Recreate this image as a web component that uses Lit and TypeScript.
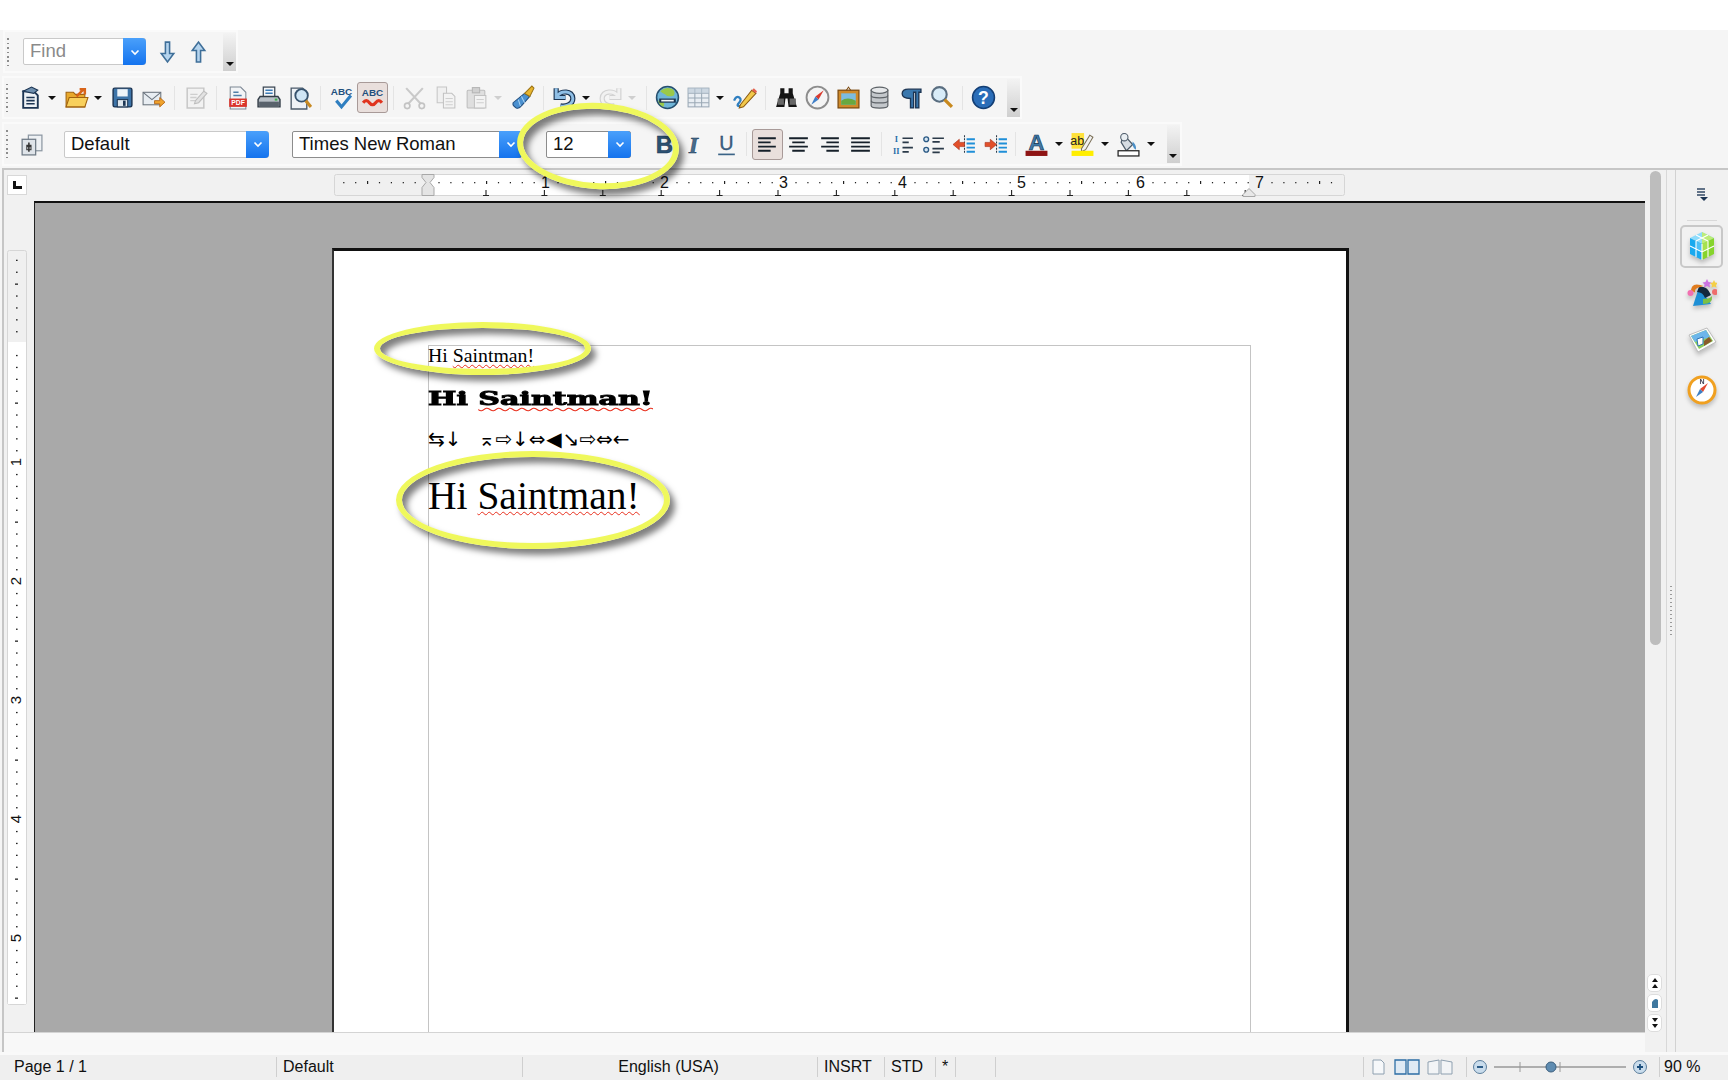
import { LitElement, html, css, svg, TemplateResult } from "lit";
import { customElement } from "lit/decorators.js";

const F = `font-family="Liberation Sans, Arial, sans-serif"`;
const DK = "#1c3553";
const I: Record<string, TemplateResult> = {
  down: svg`<path d="M10 3h4v11h4l-6 8-6-8h4z" fill="#b5d4ee" stroke="#3f6f99" stroke-width="1.500"/>`,
  up: svg`<path d="M10 22h4V11h4l-6-8-6 8h4z" fill="#b5d4ee" stroke="#3f6f99" stroke-width="1.500"/>`,
  new: svg`<path d="M5 6h10l4 4v12H5z" fill="#eef2f6" stroke="${DK}" stroke-width="1.8"/><path d="M5 6l8-4 6 3-4 3z" fill="#6f8fae" stroke="${DK}"/><path d="M8 12h8M8 15h8M8 18h8" stroke="${DK}" stroke-width="1.6"/>`,
  open: svg`<path d="M2 7h7l2 2h9v12H2z" fill="#e8a92c" stroke="#a0620f"/><path d="M2 21l3-9h18l-3 9z" fill="#f8d05c" stroke="#a0620f"/><path d="M12 11l7-7m-4 0h5v5" fill="none" stroke="#d8641a" stroke-width="2.4"/>`,
  save: svg`<rect x="3" y="3" width="18" height="18" rx="1.5" fill="#3d74a8" stroke="${DK}" stroke-width="1.4"/><rect x="7" y="4" width="10" height="7" fill="#eef4f9"/><rect x="7" y="14" width="10" height="7" fill="#dfe7ee" stroke="${DK}"/><rect x="12.5" y="15" width="2.5" height="5" fill="${DK}"/>`,
  mail: svg`<rect x="2" y="7" width="17" height="12" fill="#e8edf2" stroke="#69727c"/><path d="M2 7l8.5 7L19 7" fill="none" stroke="#69727c"/><path d="M13 15h5v-3l5 4.5-5 4.5v-3h-5z" fill="#f0a32c" stroke="#b05f10" stroke-width=".8"/>`,
  edit: svg`<path d="M4 3h16v19H4z" fill="#f2f2f2" stroke="#c6c6c6" stroke-width="1.4"/><path d="M7 9h7M7 12h6M7 15h5" stroke="#cfcfcf" stroke-width="1.4"/><path d="M12 15l8-9 3 2-8 9-4 1z" fill="#e2e2e2" stroke="#bdbdbd"/>`,
  pdf: svg`<path d="M5 2h10l5 5v16H5z" fill="#f2f4f6" stroke="#7d8894"/><path d="M8 7h5M8 10h8" stroke="#4f7ea8" stroke-width="1.5"/><rect x="4" y="13" width="17" height="8" fill="#d9342b"/><text x="12.5" y="19.6" font-size="6.5" font-weight="700" fill="#fff" text-anchor="middle" ${F}>PDF</text>`,
  print: svg`<rect x="7" y="2" width="11" height="10" fill="#f4f6f8" stroke="#3a4653" stroke-width="1.2"/><path d="M9 5h7M9 8h7" stroke="#3a7ab5" stroke-width="1.4"/><path d="M4 11h17l2 3v7H2v-7z" fill="#b9c0c7" stroke="#333d47" stroke-width="1.4"/><rect x="3" y="16" width="19" height="5" fill="#59626c"/><rect x="18" y="13" width="2.5" height="2" fill="#3fae4a"/>`,
  preview: svg`<path d="M4 3h11l4 4v16H4z" fill="#eef2f6" stroke="#4a5a6a" stroke-width="1.3"/><circle cx="14" cy="10" r="6" fill="#cfe5f5" stroke="#37536e" stroke-width="1.8"/><path d="M18 15l5 6" stroke="#c88a22" stroke-width="3"/>`,
  spell: svg`<text x="12" y="10" font-size="9.5" font-weight="700" fill="#1f4f7d" text-anchor="middle" ${F}>ABC</text><path d="M7 15l5 6 9-11" fill="none" stroke="#2f7fc0" stroke-width="3"/>`,
  autospell: svg`<text x="12" y="11" font-size="9.5" font-weight="700" fill="#1f4f7d" text-anchor="middle" ${F}>ABC</text><path d="M3 17q3-4 6 0t6 0 6 0" fill="none" stroke="#e0341e" stroke-width="3"/>`,
  cut: svg`<path d="M4 3l14 15M20 3L6 18" stroke="#c9c9c9" stroke-width="2"/><circle cx="5" cy="20" r="2.6" fill="none" stroke="#c3c3c3" stroke-width="1.6"/><circle cx="19" cy="20" r="2.6" fill="none" stroke="#c3c3c3" stroke-width="1.6"/>`,
  copy: svg`<path d="M4 2h9v15H4z" fill="#f0f0f0" stroke="#c6c6c6"/><path d="M10 8h8l3 3v11H10z" fill="#f3f3f3" stroke="#c2c2c2"/><path d="M12 13h7M12 16h7M12 19h7" stroke="#cfcfcf"/>`,
  paste: svg`<rect x="3" y="5" width="17" height="17" rx="1" fill="#dfdfdf" stroke="#bdbdbd"/><rect x="8" y="2.5" width="7" height="5" fill="#d0d0d0" stroke="#b5b5b5"/><path d="M10 10h11v12H10z" fill="#f3f3f3" stroke="#c2c2c2"/><path d="M12 14h7M12 17h7" stroke="#cfcfcf"/>`,
  brush: svg`<path d="M14 8L3 17q-1 3 3 5 3 1 5-2l8-9z" fill="#4a90d0" stroke="#234f7f"/><path d="M8 14l2 6M11 11l3 6" stroke="#a9d3f2"/><path d="M14 8l5 3 4-8-2-2z" fill="#e8b52e" stroke="#9c7415"/>`,
  undo: svg`<path d="M4 3v9h9M5 11C8 5 20 5 20 13c0 6-7 8-12 7" fill="none" stroke="${DK}" stroke-width="5"/><path d="M4 3v9h9M5 11C8 5 20 5 20 13c0 6-7 8-12 7" fill="none" stroke="#8fbfe6" stroke-width="2.8"/>`,
  redo: svg`<path d="M20 3v9h-9M19 11C16 5 4 5 4 13c0 6 7 8 12 7" fill="none" stroke="#d2d2d2" stroke-width="5"/><path d="M20 3v9h-9M19 11C16 5 4 5 4 13c0 6 7 8 12 7" fill="none" stroke="#f1f1f1" stroke-width="2.8"/>`,
  globe: svg`<circle cx="12" cy="12" r="10.5" fill="#6fb5d8" stroke="#27506f" stroke-width="1.5"/><path d="M5 6q5-5 12-2 3 3 1 6-6 2-8-1-3-1-5-3zM3 15q4-1 6 3l-1 3q-4-2-5-6z" fill="#9bc94a"/><path d="M4 13h16v4H4z" fill="#1c3553"/><path d="M6 15h12" stroke="#f0f4f7" stroke-width="1.6"/>`,
  table: svg`<rect x="2" y="3" width="20" height="18" fill="#e9eef3" stroke="#9aa8b5"/><path d="M2 8h20M2 12.500h20M2 17h20M8.500 3v18M15 3v18" stroke="#9aa8b5"/><path d="M2 3h20v5H2z" fill="#b9c8d6" opacity=".6"/>`,
  draw: svg`<path d="M2 15q2-5 5-3t-1 6q-2 3 3 2l3-2" fill="none" stroke="#2f7fc0" stroke-width="2.2"/><path d="M8 19L19 5l4 3-12 13-4 1z" fill="#f2c84a" stroke="#8b5a13"/><path d="M19 5l4 3 1-2-3-3z" fill="#e4624f"/>`,
  bino: svg`<path d="M6 3h4v5h4V3h4v5l4 13h-8l-1-8h-2l-1 8H2L6 8z" fill="#141414"/><rect x="3.500" y="13" width="6" height="6" fill="#676767"/><rect x="15" y="13" width="6" height="6" fill="#676767"/>`,
  nav: svg`<circle cx="12" cy="12" r="10.500" fill="#f4f4f4" stroke="#8d8d8d" stroke-width="1.8"/><path d="M18 5l-8 6 3 3z" fill="#d93a2e"/><path d="M6 19l4-8 3 3z" fill="#3f7fc8"/>`,
  gallery: svg`<rect x="2" y="5" width="20" height="17" fill="#cf8a2a" stroke="#7d4a0f" stroke-width="1.200"/><rect x="5" y="8" width="14" height="11" fill="#7cbce0"/><path d="M5 19v-4q6-4 14 0v4z" fill="#69a83f"/><path d="M10 5l2-3 2 3" fill="none" stroke="#7d4a0f"/>`,
  db: svg`<path d="M4 5v15c0 3 16 3 16 0V5z" fill="#c3c7cb" stroke="#5e6368" stroke-width="1.200"/><ellipse cx="12" cy="5" rx="8" ry="3" fill="#e6e8ea" stroke="#5e6368" stroke-width="1.200"/><path d="M4 10c0 3 16 3 16 0M4 15c0 3 16 3 16 0" fill="none" stroke="#5e6368" stroke-width="1.200"/>`,
  para: svg`<path d="M10 4h12v3h-2v15h-3V7h-2v15h-3v-9q-8 0-8-4.500T10 4z" fill="#3a78ae" stroke="${DK}" stroke-width="1.300"/>`,
  find: svg`<circle cx="10" cy="9" r="7" fill="#d8ecf8" stroke="#5a6e80" stroke-width="2"/><path d="M15 14l7 7" stroke="#c8891e" stroke-width="3.200"/>`,
  help: svg`<circle cx="12" cy="12" r="10.500" fill="#2a6db8" stroke="#143f75" stroke-width="1.500"/><text x="12" y="18.500" font-size="17" font-weight="700" fill="#fff" text-anchor="middle" ${F}>?</text>`,
  styles: svg`<rect x="9" y="3" width="13" height="15" fill="#eef1f4" stroke="#8d98a3" stroke-width="1.200"/><rect x="3" y="7" width="13" height="15" fill="#dfe4e9" stroke="#6f7a85" stroke-width="1.200"/><path d="M9.500 10v9M7 13h5" stroke="#333" stroke-width="1.500"/><rect x="7.500" y="14" width="4" height="3" fill="none" stroke="#333"/>`,
  b: svg`<text x="12" y="20" font-size="23" font-weight="700" fill="#2c5272" stroke="#1c3553" stroke-width=".5" text-anchor="middle" ${F}>B</text>`,
  i: svg`<text x="10" y="20" font-size="23" font-weight="700" font-style="italic" fill="#466b8a" stroke="#1c3553" stroke-width=".4" text-anchor="middle" font-family="Liberation Serif, serif">I</text>`,
  u: svg`<text x="12" y="17.500" font-size="19" fill="#3b6487" stroke="#1c3553" stroke-width=".3" text-anchor="middle" ${F}>U</text><path d="M4 21.500h16" stroke="#3b6487" stroke-width="1.600"/>`,
  al: svg`<path d="M3 6h17M3 10h12M3 14h17M3 18h12" stroke="#16202a" stroke-width="1.700"/>`,
  ac: svg`<path d="M3 6h18M6 10h12M3 14h18M6 18h12" stroke="#16202a" stroke-width="1.700"/>`,
  ar: svg`<path d="M4 6h17M9 10h12M4 14h17M9 18h12" stroke="#16202a" stroke-width="1.700"/>`,
  aj: svg`<path d="M3 6h18M3 10h18M3 14h18M3 18h18" stroke="#16202a" stroke-width="1.700"/>`,
  num: svg`<text x="6" y="10" font-size="8" font-weight="700" fill="#2a6fa8" text-anchor="middle" font-family="Liberation Serif, serif">I</text><text x="6" y="21" font-size="8" font-weight="700" fill="#2a6fa8" text-anchor="middle" font-family="Liberation Serif, serif">II</text><path d="M12 6h10M12 10h6M12 15h10M12 19h6" stroke="#2b3a49" stroke-width="1.600"/>`,
  bul: svg`<circle cx="5" cy="7" r="2.300" fill="#d7e6f2" stroke="#2b5a85" stroke-width="1.300"/><circle cx="5" cy="17" r="2.300" fill="#d7e6f2" stroke="#2b5a85" stroke-width="1.300"/><path d="M11 6h11M11 9.500h7M11 16h11M11 19.500h7" stroke="#2b3a49" stroke-width="1.600"/>`,
  out: svg`<path d="M12 3v18" stroke="#2b3a49" stroke-dasharray="2 1"/><path d="M14 7h8M14 11h8M14 15h8M14 19h8" stroke="#1f8fd8" stroke-width="1.800"/><path d="M1 12l6-5v3h5v4H7v3z" fill="#e2502a" stroke="#a8301a" stroke-width=".6"/>`,
  ind: svg`<path d="M13 3v18" stroke="#2b3a49" stroke-dasharray="2 1"/><path d="M15 7h8M15 11h8M15 15h8M15 19h8" stroke="#1f8fd8" stroke-width="1.800"/><path d="M13 12L7 7v3H2v4h5v3z" fill="#e2502a" stroke="#a8301a" stroke-width=".6"/>`,
  color: svg`<text x="12" y="17" font-size="21" font-weight="700" fill="#3f7aa8" stroke="#16324e" stroke-width=".6" text-anchor="middle" ${F}>A</text><rect x="1.500" y="18" width="21" height="5" fill="#8e1414"/>`,
  hi: svg`<rect x="1.500" y="1" width="12" height="15" fill="#ffe13a"/><text x="7" y="12.500" font-size="12" fill="#222" text-anchor="middle" ${F}>ab</text><path d="M11 16l8-13 3 2-7 12-4 2z" fill="#f1f1f1" stroke="#7a6e55"/><rect x="1.500" y="18" width="21" height="5" fill="#ffee00"/>`,
  bg: svg`<path d="M7 2l9 10-6 6-5-8z" fill="#d6dce2" stroke="#4c5a68" stroke-width="1.200"/><circle cx="8" cy="5" r="3.500" fill="#e9eef2" stroke="#4c5a68"/><path d="M16 9q4 4 3 8-4-3-3-8z" fill="#4b90c8"/><rect x="2" y="18" width="20" height="5" fill="#fff" stroke="#222" stroke-width="1.200"/>`,
  deck: svg`<path d="M15 1l12 6-12 6-12-6z" fill="#8fdcfb"/><path d="M15 1l12 6-12 6z" fill="#bdec78"/><path d="M3 7l12 6v16L3 23z" fill="#19a9ef"/><path d="M27 7l-12 6v16l12-6z" fill="#86d42c"/><path d="M9 10l6 3v8l-6-3z" fill="#4fc0f6"/><path d="M21 10l-6 3v8l6-3z" fill="#a6e24e"/><path d="M3 15l12 6 12-6M9 4l12 6M21 4L9 10M9 10v16M21 10v16M15 13v16" fill="none" stroke="#fff" stroke-width="1.100"/>`,
  stl: svg`<path d="M6 28L12 9l12 17z" fill="#1e8fd5"/><path d="M12 9q8-2 12 8l-6 3q-2-6-8-6z" fill="#13283d"/><path d="M16 26q10 0 9-8-2 3-9 3z" fill="#7cc043"/><path d="M5 12q1-6 8-4l-3 1q-3 1-3 4z" fill="#e07c1f" stroke="#e07c1f" stroke-width="2"/><path d="M20 1l1.500 3 3 .5-2 2 .5 3-3-1.500-3 1.500.5-3-2-2 3-.5z" fill="#cc73e1"/><path d="M27 2l1.200 2.500 2.800.4-2 2 .5 2.800-2.500-1.300-2.500 1.300.5-2.800-2-2 2.800-.4z" fill="#f4cf46"/><circle cx="3.500" cy="15" r="3" fill="#f26fb1"/><circle cx="28" cy="14" r="3" fill="#ef6d6d"/>`,
  pic: svg`<path d="M2 9L20 2l9 14-18 10z" fill="#fdfdfd" stroke="#bbb"/><path d="M4 10l15-6 7 11-14 8z" fill="#8ccd5a"/><path d="M4 10l15-6 4 7-15 5z" fill="#6db6ea"/><path d="M10 13l6-2v7l-5 2z" fill="#fff" stroke="#2d73b5"/><path d="M17 15l5-4 3 4-8 5z" fill="#8a5a2b"/>`,
  comp: svg`<circle cx="15" cy="15" r="13" fill="#fff" stroke="#f0a020" stroke-width="3"/><path d="M21 8l-8 6 3 3z" fill="#e2492f"/><path d="M9 22l4-8 3 3z" fill="#3d7fc4"/><text x="15" y="8.500" font-size="7" font-weight="700" fill="#445" text-anchor="middle" ${F}>N</text>`,
  menu: svg`<path d="M3 2h8M3 5h8M3 8h8" stroke="#334a66" stroke-width="1.300"/><path d="M6 10h8l-4 4z" fill="#1c3553"/>`,
};

const ico = (n: string, c = "ic") =>
  html`<svg class=${c} viewBox=${n === "deck" || n === "stl" || n === "pic" || n === "comp" ? "0 0 30 30" : "0 0 24 24"}>${I[n]}</svg>`;

const items = (s: string) =>
  s.split(" ").map((t) => {
    if (t === "|") return html`<span class="sep"></span>`;
    if (t === ">") return html`<span class="dd"><i></i></span>`;
    if (t === ">-") return html`<span class="dd off"><i></i></span>`;
    if (t[0] === "*") return html`<span class="slot on">${ico(t.slice(1))}</span>`;
    return html`<span class="slot">${ico(t)}</span>`;
  });

const combo = (text: string, cls: string) =>
  html`<span class="combo ${cls}"><span class="val">${text}</span><span class="btn"><svg viewBox="0 0 12 12" width="12" height="12"><path d="M2.500 4.500L6 8l3.500-3.500" fill="none" stroke="#fff" stroke-width="1.600"/></svg></span></span>`;

const handle = () => html`<span class="handle"><i></i></span>`;
const grip = (c = "") => html`<span class="grip ${c}"><i></i></span>`;

const range = (n: number) => Array.from({ length: n }, (_, i) => i);
const R = "Liberation Sans, Arial, sans-serif";

function hRuler() {
  const w = 1011, o = 92.5, inch = 119;
  const marks: TemplateResult[] = [];
  for (let k = -8; k <= 76; k++) {
    const x = o + (k * inch) / 10;
    if (x < 6 || x > w - 3 || k % 10 === 0) continue;
    const big = Math.abs(k % 10) === 5;
    marks.push(svg`<rect x=${x} y=${big ? 7 : 8} width="1.200" height=${big ? 3 : 1.300} fill="#222"/>`);
  }
  const tabs = range(14).map((i) => {
    const x = 486 - 334 + i * 58.4;
    return svg`<path d="M${x} 16v5M${x - 3} 21.500h6" stroke="#222" stroke-width="1.100" fill="none"/>`;
  });
  const nums = range(7).map((i) => svg`<text x=${o + inch * (i + 1)} y="14" font-size="16" text-anchor="middle" fill="#111" font-family=${R}>${i + 1}</text>`);
  return html`<svg class="hruler" viewBox="0 0 ${w} 23" width=${w} height="23">
    <rect x=".5" y=".5" width=${w - 1} height="21" rx="2" fill="#f0f0f0" stroke="#d6d6d6"/>
    <rect x="94" y="1" width="821" height="20" fill="#fff"/>
    ${marks}${tabs}${nums}
    <path d="M88 .5h12v3l-4 5 4 5v8H88v-8l4-5-4-5z" fill="#e4e4e4" stroke="#a8a8a8"/>
    <path d="M915 14.500l6 6v2h-12v-2z" fill="#e8e8e8" stroke="#a8a8a8"/>
  </svg>`;
}

function vRuler() {
  const h = 755, o = 93, inch = 119;
  const marks: TemplateResult[] = [];
  for (let k = -7; k <= 55; k++) {
    const y = o + (k * inch) / 10;
    if (y < 3 || y > h - 3 || k % 10 === 0) continue;
    const big = Math.abs(k % 10) === 5;
    marks.push(svg`<rect x=${big ? 8 : 9} y=${y} width=${big ? 3 : 1.600} height="1.300" fill="#222"/>`);
  }
  const nums = range(5).map((i) => {
    const y = o + inch * (i + 1);
    return svg`<text x="8.500" y=${y + 5.5} font-size="15" text-anchor="middle" fill="#111" font-family=${R} transform="rotate(-90 8.500 ${y})">${i + 1}</text>`;
  });
  return html`<svg class="vruler" viewBox="0 0 20 ${h}" width="20" height=${h}>
    <rect x=".5" y=".5" width="19" height=${h - 1} rx="2" fill="#f0f0f0" stroke="#d6d6d6"/>
    <rect x="1" y="92" width="18" height="662" fill="#fff"/>
    ${marks}${nums}
  </svg>`;
}

const GLYPHS = ["⇆", "↓", "", "⌅", "⇨", "↓", "⇔", "◀", "↘", "⇨", "⇔", "←"];

@customElement("app-root")
export class AppRoot extends LitElement {
  static styles = css`
    :host { display: block; position: relative; width: 1728px; height: 1080px; overflow: hidden; background: #f5f5f5; font-family: "Liberation Sans", Arial, sans-serif; color: #111; }
    * { box-sizing: border-box; }
    .root { display: flex; flex-direction: column; height: 1080px; }
    .strip { height: 30px; background: #fff; flex: none; }
    .bars { display: flex; flex-direction: column; align-items: flex-start; gap: 3px; padding-left: 2px; height: 138px; flex: none; }
    .tb { display: flex; align-items: center; border: 2px solid #fafafa; background: #f5f5f5; height: 43px; }
    .tb.t1 { margin-left: 1px; }
    .tb.t3 { height: 44px; }
    .grip { width: 11.500px; align-self: stretch; display: flex; align-items: center; justify-content: flex-start; padding-left: 1.500px; flex: none; }
    .t2 .grip { width: 10.500px; }
    .grip.w { width: 18px; padding-left: 2px; }
    .grip i { display: block; width: 2px; height: 28px; background: repeating-linear-gradient(#8d8d8d 0 1.500px, transparent 1.500px 4.500px); }
    .slot { width: 31px; height: 31px; display: flex; align-items: center; justify-content: center; flex: none; }
    .slot.on { background: #e9dfdc; border: 1px solid #a89a98; border-radius: 3px; }
    .ic { width: 25px; height: 25px; display: block; flex: none; }
    .dd { width: 15px; display: flex; padding-left: 2.500px; flex: none; }
    .dd i { width: 0; height: 0; border-left: 4px solid transparent; border-right: 4px solid transparent; border-top: 4px solid #111; }
    .dd.off i { border-top-color: #cfcfcf; }
    .sep { width: 1px; height: 24px; background: #e4e4e4; flex: none; margin: 0 5px 0 4.500px; }
    .t2 .sep { margin-left: 5px; }
    .handle { width: 13px; height: 38px; background: linear-gradient(#f3f3f3, #cfcfcf); position: relative; flex: none; margin-left: 8.500px; }
    .handle i { position: absolute; left: 2.500px; bottom: 5px; border-left: 4px solid transparent; border-right: 4px solid transparent; border-top: 4px solid #111; }
    .t1 .handle { margin-left: 9.500px; }
    .t3 .handle { margin-left: 7.500px; }
    .combo { display: flex; height: 27px; background: #fff; border: 1px solid #c9c9c9; border-radius: 2px; flex: none; font-size: 18.500px; line-height: 24px; }
    .combo .val { flex: 1; padding-left: 6px; }
    .combo .btn { width: 23px; margin: -1px -1px -1px 0; background: linear-gradient(#4aa0fb, #1473ee); border-radius: 0 4px 4px 0; display: flex; align-items: center; justify-content: center; }
    .c-find { width: 123px; margin: 0 5.500px 0 0; color: #8a8a8a; }
    .c-def { width: 205px; margin-left: 17.500px; }
    .c-font { width: 230px; margin-left: 23px; border-color: #8c8c8c; }
    .c-size { width: 85px; margin: 0 17.500px 0 24px; border-color: #8c8c8c; }
    .main { flex: 1; min-height: 0; display: flex; border-top: 2px solid #c6c6c6; margin-left: 2px; border-left: 2px solid #c6c6c6; background: #f1f1f1; }
    .work { flex: 1; min-width: 0; display: flex; flex-direction: column; }
    .rrow { height: 31px; flex: none; display: flex; padding: 5px 0 0 3px; }
    .corner { width: 20px; height: 20px; background: #fff; border: 1px solid #d8d8d8; display: flex; align-items: center; justify-content: center; flex: none; }
    .corner i { width: 9px; height: 8px; border-left: 3px solid #111; border-bottom: 3px solid #111; display: block; }
    .hruler { margin-left: 307px; margin-top: -1px; display: block; }
    .body { flex: 1; min-height: 0; display: flex; }
    .lgut { width: 30px; flex: none; padding: 49px 0 0 3px; }
    .vruler { display: block; }
    .doc { width: 1611px; flex: none; background: #a9a9a9; border-top: 2px solid #111; border-left: 1px solid #222; overflow: hidden; padding: 45px 0 0 297px; }
    .page { width: 1017px; height: 800px; background: #fff; border: 2px solid #111; border-left-color: #333; border-top-width: 3px; border-right-width: 3px; padding: 94px 0 0 94px; font-family: "Liberation Serif", "Times New Roman", serif; }
    .frame { width: 823px; height: 700px; border: 1px solid #c4c4c4; border-bottom: 0; }
    .l { color: #000; white-space: nowrap; margin-left: -1px; }
    .l1 { font-size: 19.800px; line-height: 22px; margin-top: -2px; }
    .l2 { font-family: "DejaVu Serif", serif; font-weight: 700; font-size: 18px; line-height: 22px; margin-top: 22px; transform-origin: left center; transform: scaleX(1.670); -webkit-text-stroke: .9px #000; width: 140px; }
    .l3 { display: flex; font-family: "DejaVu Sans", sans-serif; font-size: 20px; line-height: 22px; margin-top: 18px; }
    .l3 span { width: 16.800px; text-align: center; flex: none; }
    .l4 { font-size: 39.500px; line-height: 44px; margin-top: 24px; }
    .w { text-decoration: underline wavy #e8301e; text-decoration-thickness: 1px; text-underline-offset: 2px; text-decoration-skip-ink: none; }
    .sb { width: 21px; flex: none; position: relative; }
    .thumb { position: absolute; left: 5px; top: -30px; width: 11px; height: 474px; background: #bdbdbd; border-radius: 6px; }
    .nav { position: absolute; left: 2px; bottom: 0; display: flex; flex-direction: column; gap: 2px; }
    .nav span { width: 15px; height: 18px; background: #fff; border: 1px solid #ddd; border-radius: 5px; display: flex; align-items: center; justify-content: center; }
    .hs { height: 20px; flex: none; background: #f8f8f8; border-top: 1px solid #d4d4d4; margin-right: 21px; }
    .side { width: 62px; flex: none; border-left: 1px solid #d8d8d8; display: flex; position: relative; }
    .side .in { margin-left: 8px; flex: 1; border-left: 1px solid #d2d2d2; display: flex; flex-direction: column; align-items: center; padding-top: 17px; padding-right: 1px; }
    .mn { width: 16px; height: 16px; display: block; flex: none; }
    .hr { width: 30px; height: 1px; background: #d9d9d9; margin: 17px 0 4px; flex: none; }
    .dk { width: 43px; height: 43px; display: flex; align-items: center; justify-content: center; flex: none; margin-bottom: 5.200px; padding-bottom: 3px; }
    .dk.on { border: 2px solid #c8c8c8; border-radius: 5px; padding-bottom: 1px; }
    .dk svg { width: 30px; height: 30px; display: block; filter: drop-shadow(0 3px 2px rgba(0,0,0,.22)); }
    .sash { position: absolute; left: 3px; top: 416px; width: 2px; height: 50px; background: repeating-linear-gradient(#9a9a9a 0 1.500px, transparent 1.500px 4px); }
    .status { height: 28px; flex: none; background: linear-gradient(#f9f9f9 0 3px, #efefef 3px); display: flex; font-size: 16px; padding-top: 3px; }
    .cell { display: flex; align-items: center; border-left: 1px solid #cfcfcf; height: 20px; margin-top: 2px; padding-left: 6px; flex: none; white-space: nowrap; }
    .cell.first { border-left: 0; padding-left: 14px; width: 276px; }
    .cell.ctr { justify-content: center; padding: 0 3px 0 0; }
    .cell svg { display: block; flex: none; }
    .c246 { width: 246px; } .c295 { width: 295px; } .c67 { width: 67px; } .c51 { width: 51px; } .c20 { width: 20px; } .c40 { width: 40px; } .c368 { width: 368px; } .c69 { width: 69px; padding-left: 4px; }
    .pg { width: 103px; gap: 7px; }
    .zm { width: 193px; padding-left: 5px; gap: 6px; }
    .hl { position: absolute; border-radius: 50%; border: 6px solid #eff85c; box-shadow: 5px 6px 6px rgba(0,0,0,.5), inset 5px 6px 6px rgba(0,0,0,.5); pointer-events: none; }
    .e1 { left: 374px; top: 322px; width: 217px; height: 53px; }
    .e2 { left: 396px; top: 451px; width: 274px; height: 98px; }
    .e3 { left: 517px; top: 103px; width: 162px; height: 86px; transform: rotate(3deg); }
  `;

  render() {
    return html`<div class="root">
      <div class="strip"></div>
      <div class="bars">
        <div class="tb t1">${grip("w")}${combo("Find", "c-find")}${items("down up")}${handle()}</div>
        <div class="tb t2">${grip()}${items("new > open > save mail | edit | pdf print preview | spell *autospell | cut copy paste >- brush | undo > redo >- | globe table > draw | bino nav gallery db para find | help")}${handle()}</div>
        <div class="tb t3">${grip()}${items("styles")}${combo("Default", "c-def")}${combo("Times New Roman", "c-font")}${combo("12", "c-size")}${items("b i u | *al ac ar aj | num bul out ind | color > hi > bg >")}${handle()}</div>
      </div>
      <div class="main">
        <div class="work">
          <div class="rrow"><span class="corner"><i></i></span>${hRuler()}</div>
          <div class="body">
            <div class="lgut">${vRuler()}</div>
            <div class="doc">
              <div class="page"><div class="frame">
                <div class="l l1">Hi <span class="w">Saintman!</span></div>
                <div class="l l2">Hi <span class="w">Saintman!</span></div>
                <div class="l l3">${GLYPHS.map((g) => html`<span>${g}</span>`)}</div>
                <div class="l l4">Hi <span class="w">Saintman!</span></div>
              </div></div>
            </div>
            <div class="sb">
              <div class="thumb"></div>
              <div class="nav">
                <span><svg width="10" height="12" viewBox="0 0 10 12"><path d="M5 1l3 4H2zM5 7l3 4H2z" fill="#111"/></svg></span>
                <span><svg width="10" height="12" viewBox="0 0 10 12"><path d="M2 11V5q3-5 6-2v8z" fill="#3f789f"/></svg></span>
                <span><svg width="10" height="12" viewBox="0 0 10 12"><path d="M2 1h6L5 5zM2 7h6l-3 4z" fill="#111"/></svg></span>
              </div>
            </div>
          </div>
          <div class="hs"></div>
        </div>
        <div class="side"><span class="sash"></span><div class="in">
          <svg class="mn" viewBox="0 0 16 16">${I.menu}</svg>
          <div class="hr"></div>
          <div class="dk on">${ico("deck", "x")}</div>
          <div class="dk">${ico("stl", "x")}</div>
          <div class="dk">${ico("pic", "x")}</div>
          <div class="dk">${ico("comp", "x")}</div>
        </div></div>
      </div>
      <div class="status">
        <div class="cell first">Page 1 / 1</div>
        <div class="cell c246">Default</div>
        <div class="cell ctr c295">English (USA)</div>
        <div class="cell c67">INSRT</div>
        <div class="cell c51">STD</div>
        <div class="cell c20">*</div>
        <div class="cell c40"></div>
        <div class="cell c368"></div>
        <div class="cell pg">
          <svg width="17" height="16" viewBox="0 0 17 16"><path d="M3 1h8l3 3v11H3z" fill="#f6f8fa" stroke="#8ea0b0"/></svg>
          <svg width="26" height="16" viewBox="0 0 26 16"><path d="M1 1h11v14H1zM14 1h11v14H14z" fill="#dfeaf4" stroke="#2d6ea5" stroke-width="1.300"/></svg>
          <svg width="26" height="16" viewBox="0 0 26 16"><path d="M1 3l11-2v14H1zM14 1l11 2v12H14z" fill="#f2f4f6" stroke="#8ea0b0"/></svg>
        </div>
        <div class="cell zm">
          <svg width="16" height="16" viewBox="0 0 16 16"><circle cx="8" cy="8" r="6.500" fill="#c9dcec" stroke="#5b7e9c"/><path d="M5 8h6" stroke="#1c4f7d" stroke-width="1.800"/></svg>
          <svg width="132" height="16" viewBox="0 0 132 16"><path d="M0 8h132" stroke="#999" stroke-width="1.300"/><path d="M26 3v10M66 3v10" stroke="#999"/><circle cx="57" cy="8" r="5" fill="#5f8cb1" stroke="#3b5f7e"/></svg>
          <svg width="16" height="16" viewBox="0 0 16 16"><circle cx="8" cy="8" r="6.500" fill="#c9dcec" stroke="#5b7e9c"/><path d="M5 8h6M8 5v6" stroke="#1c4f7d" stroke-width="1.800"/></svg>
        </div>
        <div class="cell c69">90 %</div>
      </div>
    </div>
    <div class="hl e1"></div>
    <div class="hl e2"></div>
    <div class="hl e3"></div>`;
  }
}
